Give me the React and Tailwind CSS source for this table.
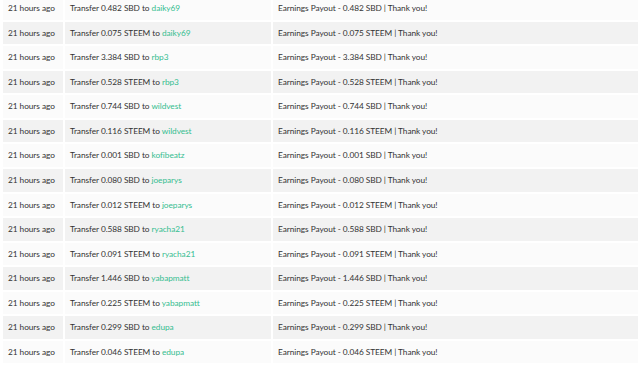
import React from "react";

const rows = [
  ["0.482", "SBD", "daiky69"],
  ["0.075", "STEEM", "daiky69"],
  ["3.384", "SBD", "rbp3"],
  ["0.528", "STEEM", "rbp3"],
  ["0.744", "SBD", "wildvest"],
  ["0.116", "STEEM", "wildvest"],
  ["0.001", "SBD", "kofibeatz"],
  ["0.080", "SBD", "joeparys"],
  ["0.012", "STEEM", "joeparys"],
  ["0.588", "SBD", "ryacha21"],
  ["0.091", "STEEM", "ryacha21"],
  ["1.446", "SBD", "yabapmatt"],
  ["0.225", "STEEM", "yabapmatt"],
  ["0.299", "SBD", "edupa"],
  ["0.046", "STEEM", "edupa"],
];

export default function App() {
  return (
    <div className="w-[640px] h-[367px] overflow-hidden bg-white" style={{ fontFamily: "Lato, 'Noto Sans', sans-serif" }}>
      <div className="-mt-[3px] flex flex-col gap-[2px] pl-[3px] pr-[2px] text-[8.3px] tracking-[-0.06px] text-[#333333]">
        {rows.map(([amt, cur, user], i) => {
          const bg = i % 2 ? "bg-[#f2f2f2]" : "bg-[#fbfbfb]";
          return (
            <div key={i} className="flex gap-[2px] h-[22.57px]">
              <div className={`w-[60px] flex items-center pl-[5px] whitespace-nowrap ${bg}`}>21 hours ago</div>
              <div className={`w-[206px] flex items-center pl-[5px] whitespace-nowrap ${bg}`}>
                <span>Transfer {amt} {cur} to <a className="text-[#35bd90]">{user}</a></span>
              </div>
              <div className={`flex-1 flex items-center pl-[5px] whitespace-nowrap ${bg}`}>
                Earnings Payout - {amt} {cur} | Thank you!
              </div>
            </div>
          );
        })}
      </div>
    </div>
  );
}
